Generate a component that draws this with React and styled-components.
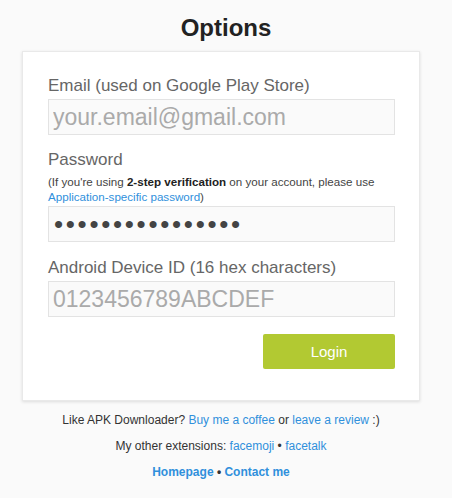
import React from "react";
import styled, { createGlobalStyle } from "styled-components";

const GlobalStyle = createGlobalStyle`
  body {
    margin: 0;
    background: #fafafa;
    font-family: "Liberation Sans", Arial, sans-serif;
  }
`;

const Page = styled.div`
  width: 452px;
  padding-bottom: 20px;
`;

const Title = styled.h1`
  margin: 14px 0 9px;
  font-size: 24px;
  line-height: 28px;
  font-weight: bold;
  color: #222;
  text-align: center;
`;

const Column = styled.div`
  width: 398px;
  margin-left: 22px;
`;

const Card = styled.div`
  box-sizing: border-box;
  background: #fff;
  border: 1px solid #e9e9e9;
  box-shadow: 0 1px 3px rgba(0, 0, 0, 0.12);
  padding: 24px 24px 31px 25px;
`;

const Field = styled.div`
  margin-top: ${(p) => p.$gap || "15px"};
`;

const Label = styled.label`
  display: block;
  font-size: 17px;
  line-height: 20px;
  color: #666;
  margin-bottom: ${(p) => (p.$tight ? "4px" : "3px")};
`;

const Hint = styled.p`
  margin: 0 0 2px;
  font-size: 11.6px;
  line-height: 15px;
  color: #444;

  b {
    color: #222;
  }
`;

const Link = styled.a`
  color: #3090dc;
  text-decoration: none;
  font-weight: ${(p) => (p.$bold ? "bold" : "normal")};
`;

const Input = styled.input`
  box-sizing: border-box;
  display: block;
  width: 100%;
  height: 36px;
  margin: 0;
  padding: 0 4px;
  border: 1px solid #e3e3e3;
  border-radius: 0;
  background: #fafafa;
  font-family: "Liberation Sans", Arial, sans-serif;
  font-size: 23px;
  color: #aaa;
  outline: none;

  &::placeholder {
    color: #aaa;
  }
`;

const PasswordInput = styled(Input)`
  font-size: 26px;
  letter-spacing: 2.7px;
  color: #444;
  padding-left: 5px;
`;

const Actions = styled.div`
  display: flex;
  justify-content: flex-end;
  margin-top: 17px;
`;

const Button = styled.button`
  width: 132px;
  height: 35px;
  border: none;
  border-radius: 2px;
  background: #b2c932;
  color: #fff;
  font-family: "Liberation Sans", Arial, sans-serif;
  font-size: 15px;
`;

const Footer = styled.div`
  margin-top: 6px;
  text-align: center;
  font-size: 12px;
  line-height: 26px;
  color: #333;
`;

const FooterLine = styled.div`
  font-weight: ${(p) => (p.$bold ? "bold" : "normal")};
`;

export default function App() {
  return (
    <Page>
      <GlobalStyle />
      <Title>Options</Title>
      <Column>
        <Card>
          <Field $gap="0">
            <Label>Email (used on Google Play Store)</Label>
            <Input type="text" placeholder="your.email@gmail.com" />
          </Field>
          <Field>
            <Label $tight>Password</Label>
            <Hint>
              (If you're using <b>2-step verification</b> on your account, please use
              <br />
              <Link href="#">Application-specific password</Link>)
            </Hint>
            <PasswordInput type="password" defaultValue="passwordpassword" />
          </Field>
          <Field $gap="16px">
            <Label>Android Device ID (16 hex characters)</Label>
            <Input type="text" placeholder="0123456789ABCDEF" />
          </Field>
          <Actions>
            <Button>Login</Button>
          </Actions>
        </Card>
        <Footer>
          <FooterLine>
            Like APK Downloader? <Link href="#">Buy me a coffee</Link> or{" "}
            <Link href="#">leave a review</Link> :)
          </FooterLine>
          <FooterLine>
            My other extensions: <Link href="#">facemoji</Link> •{" "}
            <Link href="#">facetalk</Link>
          </FooterLine>
          <FooterLine $bold>
            <Link href="#" $bold>Homepage</Link> • <Link href="#" $bold>Contact me</Link>
          </FooterLine>
        </Footer>
      </Column>
    </Page>
  );
}
